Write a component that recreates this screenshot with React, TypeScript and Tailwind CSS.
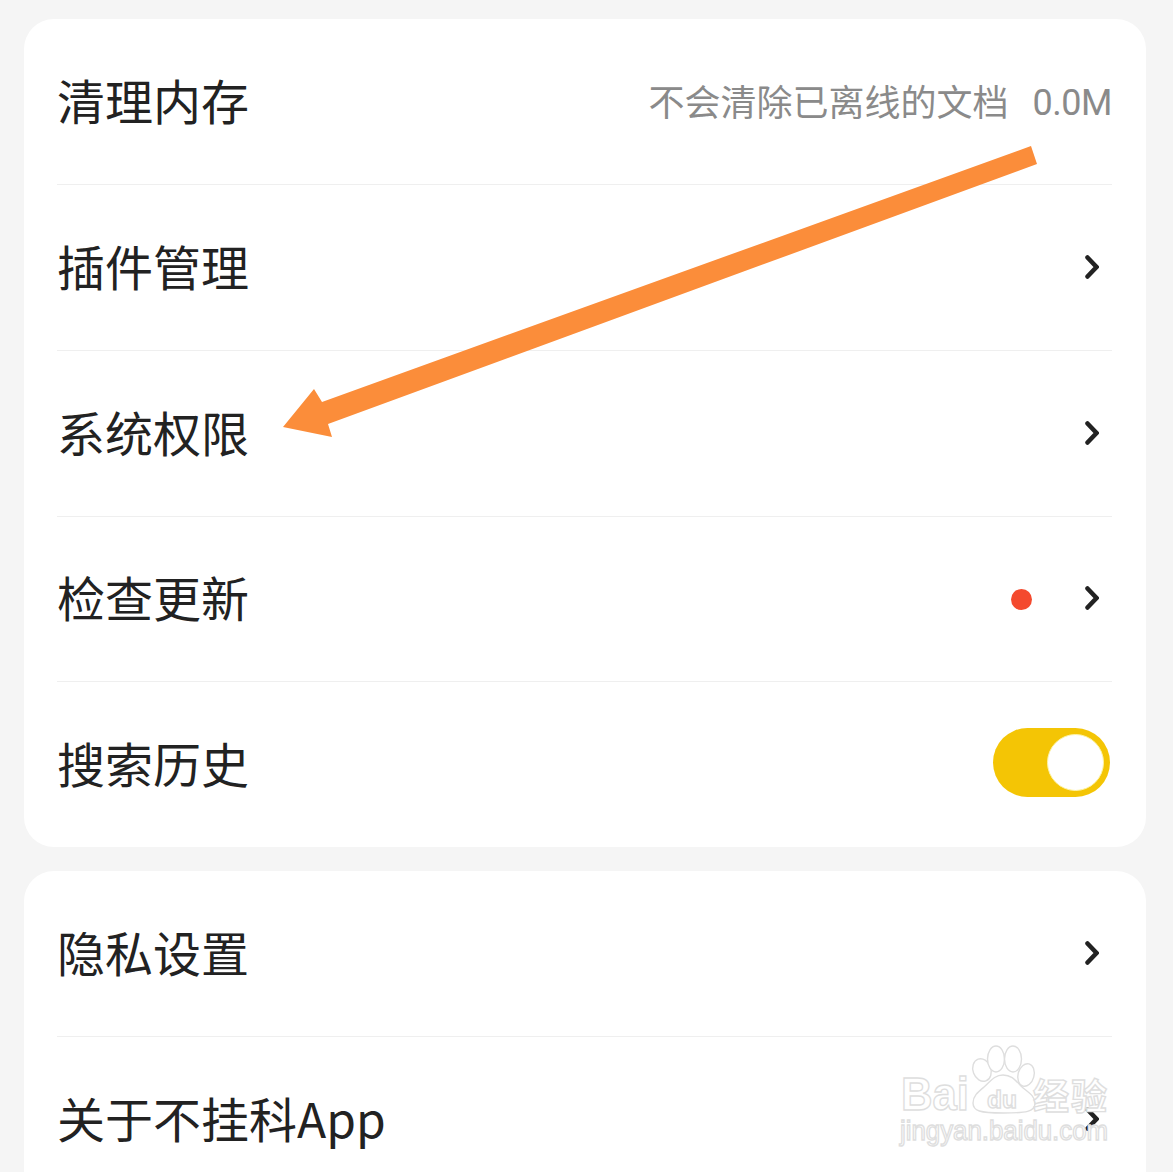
import React from 'react';

const cjk = "font-['Noto_Sans_CJK_SC','Noto_Sans',sans-serif]";

function Chevron() {
  return (
    <svg width="14" height="24" viewBox="0 0 14 24" fill="none" className="block">
      <path d="M2.5 2.5 L11.5 12 L2.5 21.5" stroke="#222222" strokeWidth="4.5" strokeLinecap="round" strokeLinejoin="miter" />
    </svg>
  );
}

function Row({
  title,
  height = 'h-[166px]',
  last = false,
  children,
}: {
  title: string;
  height?: string;
  last?: boolean;
  children?: React.ReactNode;
}) {
  return (
    <div className={`${height} mx-[33px] mr-[34px] flex items-center justify-between ${last ? '' : 'border-b border-[#efefef]'}`}>
      <span className="pb-[6px] text-[48px] leading-none text-[#222222]">{title}</span>
      {children}
    </div>
  );
}

function ChevronSlot() {
  return (
    <div className="mr-[13px] mb-[2px] flex items-center">
      <Chevron />
    </div>
  );
}

function Toggle() {
  return (
    <div className="mr-[2px] mb-[4px] flex h-[69px] w-[117px] items-center justify-end rounded-full bg-[#f4c505] pr-[6px]">
      <div className="h-[57px] w-[57px] rounded-full border border-[#fdf3a8] bg-white" />
    </div>
  );
}

function Watermark() {
  return (
    <svg width="230" height="112" viewBox="0 0 230 112" className="absolute top-[1040px] left-[890px]" fill="#ffffff" stroke="#dedede" strokeWidth="1.4">
      <text x="11" y="70" fontFamily="Liberation Sans" fontWeight="700" fontSize="47" textLength="68" lengthAdjust="spacingAndGlyphs">Bai</text>
      <ellipse cx="92" cy="30" rx="9" ry="11.5" transform="rotate(-20 92 30)" />
      <ellipse cx="106" cy="19" rx="8.5" ry="13" />
      <ellipse cx="123" cy="19" rx="8.5" ry="13" />
      <ellipse cx="136" cy="35" rx="8" ry="11.5" transform="rotate(15 136 35)" />
      <path d="M113 35 C104 35 100 42 94 47 C88 52 83 56 83 63 C83 71 90 73 113 73 C136 73 145 72 145 63 C145 55 136 51 131 46 C126 41 122 35 113 35 Z" />
      <text x="97" y="68" fontFamily="Liberation Sans" fontWeight="700" fontSize="24" textLength="30" lengthAdjust="spacingAndGlyphs">du</text>
      <text x="143" y="70" fontFamily="Noto Sans CJK SC" fontWeight="700" fontSize="36" textLength="74">经验</text>
      <text x="10" y="100" fontFamily="Liberation Sans" fontSize="27" textLength="208" lengthAdjust="spacingAndGlyphs">jingyan.baidu.com</text>
    </svg>
  );
}

export default function App() {
  return (
    <div className={`relative h-[1172px] w-[1173px] overflow-hidden bg-[#f5f5f5] pt-[19px] pr-[27px] pl-[24px] ${cjk}`}>
      <div className="rounded-[30px] bg-white">
        <Row title="清理内存">
          <div className="flex items-center text-[36px] leading-none text-[#8a8a8a]">
            <span className="pb-[4px]">不会清除已离线的文档</span>
            <span className="ml-[24px] pt-[3px] font-['Roboto',sans-serif] tracking-[-0.5px]">0.0M</span>
          </div>
        </Row>
        <Row title="插件管理">
          <ChevronSlot />
        </Row>
        <Row title="系统权限">
          <ChevronSlot />
        </Row>
        <Row title="检查更新" height="h-[165px]">
          <div className="flex items-center">
            <div className="mr-[53px] h-[21px] w-[21px] rounded-full bg-[#f44a2e]" />
            <ChevronSlot />
          </div>
        </Row>
        <Row title="搜索历史" height="h-[165px]" last>
          <Toggle />
        </Row>
      </div>

      <div className="mt-[24px] rounded-[30px] bg-white">
        <Row title="隐私设置" height="h-[166px]">
          <ChevronSlot />
        </Row>
        <Row title="关于不挂科App" last>
          <ChevronSlot />
        </Row>
      </div>

      {/* annotation arrow drawn on top of the screenshot */}
      <svg width="1173" height="1172" viewBox="0 0 1173 1172" className="pointer-events-none absolute top-0 left-0">
        <polygon
          points="1031,146 1037,164 328,424 332,437 283,427 314,389 322,402"
          fill="#fb8d3a"
        />
      </svg>

      <Watermark />
    </div>
  );
}
